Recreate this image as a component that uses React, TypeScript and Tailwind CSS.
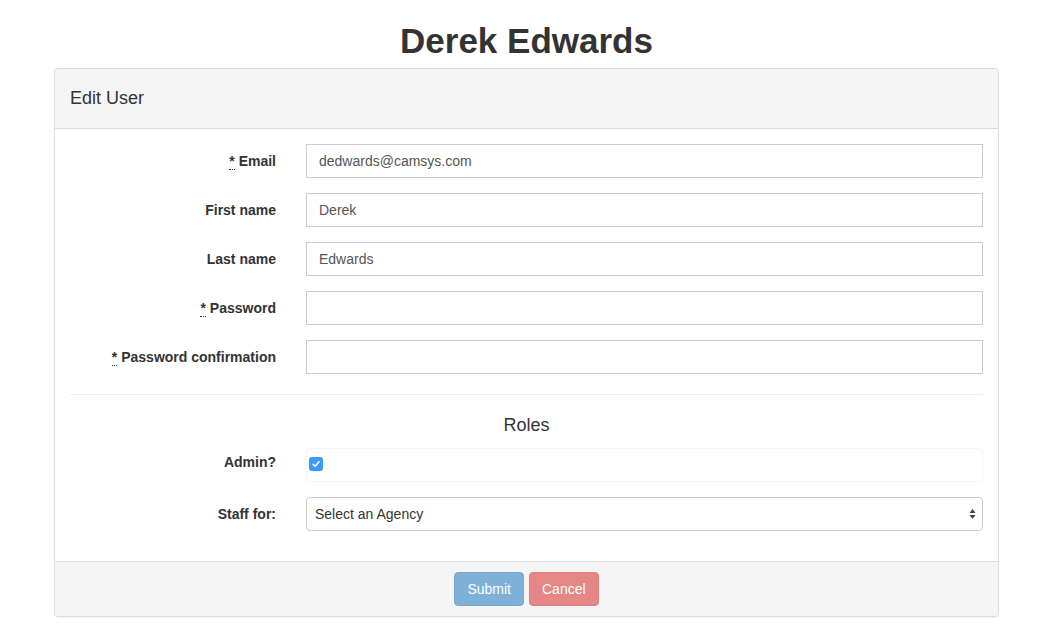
import { ReactNode } from 'react'

function Req() {
  return (
    <abbr title="required" className="no-underline border-b border-dotted border-[#333] leading-[10px] mr-1 cursor-help">
      *
    </abbr>
  )
}

function Row({ label, children, required }: { label: string; children: ReactNode; required?: boolean }) {
  return (
    <div className="flex items-center mb-[15px]">
      <label className="w-[236px] shrink-0 pr-[15px] text-right font-bold text-[14px]">
        {required && <Req />}
        {label}
      </label>
      <div className="flex-1 px-[15px]">{children}</div>
    </div>
  )
}

function Input({ value }: { value?: string }) {
  return (
    <div className="h-[34px] border border-[#ccc] px-3 flex items-center text-[14px] text-[#555] bg-white">
      {value}
    </div>
  )
}

export default function App() {
  return (
    <div className="min-h-screen bg-white text-[#333] font-['Liberation_Sans',Arial,sans-serif] text-[14px]">
      <div className="w-[945px] ml-[54px] pt-[19px]">
        <h1 className="text-center text-[35px] font-bold leading-[44px] mb-[5px]">Derek Edwards</h1>
        <div className="border border-[#ddd] rounded-[4px] shadow-[0_1px_1px_rgba(0,0,0,0.05)]">
          <div className="h-[60px] bg-[#f5f5f5] border-b border-[#ddd] rounded-t-[4px] px-[15px] flex items-center text-[18px]">
            Edit User
          </div>
          <div className="px-[15px] pt-[15px] pb-[15px]">
            <div className="-mx-[15px]">
              <Row label="Email" required>
                <Input value="dedwards@camsys.com" />
              </Row>
              <Row label="First name">
                <Input value="Derek" />
              </Row>
              <Row label="Last name">
                <Input value="Edwards" />
              </Row>
              <Row label="Password" required>
                <Input />
              </Row>
              <Row label="Password confirmation" required>
                <Input />
              </Row>
            </div>
            <hr className="border-t border-[#eee] mt-[20px] mb-[19px]" />
            <h4 className="text-center text-[18px] leading-[22px] mb-[12px]">Roles</h4>
            <div className="-mx-[15px]">
              <div className="flex items-start mb-[15px]">
                <label className="w-[236px] shrink-0 pr-[15px] text-right font-bold text-[14px] pt-[4px]">Admin?</label>
                <div className="flex-1 px-[15px]">
                  <div className="h-[34px] border border-[#f6f6f6] rounded-[4px] flex items-start pt-[8px] pl-[2px]">
                    <div className="w-[14px] h-[14px] rounded-[3px] bg-[#3b99fc] flex items-center justify-center">
                      <svg width="10" height="10" viewBox="0 0 10 10">
                        <path d="M2 5.2 L4.1 7.3 L8 2.8" stroke="white" strokeWidth="1.5" fill="none" strokeLinecap="round" strokeLinejoin="round" />
                      </svg>
                    </div>
                  </div>
                </div>
              </div>
              <Row label="Staff for:">
                <div className="h-[34px] border border-[#ccc] rounded-[4px] pl-[8px] pr-[6px] flex items-center justify-between text-[14px] text-[#333] bg-white">
                  <span>Select an Agency</span>
                  <svg width="7" height="12" viewBox="0 0 7 12">
                    <path d="M3.5 1 L6.5 5 L0.5 5 Z" fill="#444" />
                    <path d="M3.5 11 L6.5 7 L0.5 7 Z" fill="#444" />
                  </svg>
                </div>
              </Row>
            </div>
          </div>
          <div className="bg-[#f5f5f5] border-t border-[#ddd] rounded-b-[4px] py-[10px] flex justify-center gap-[5px]">
            <button className="h-[34px] px-[12px] rounded-[4px] bg-[#7eb0d8] border border-[#74a8d2] text-white text-[14px]">
              Submit
            </button>
            <button className="h-[34px] px-[12px] rounded-[4px] bg-[#e48785] border border-[#e07f7c] text-white text-[14px]">
              Cancel
            </button>
          </div>
        </div>
      </div>
    </div>
  )
}
